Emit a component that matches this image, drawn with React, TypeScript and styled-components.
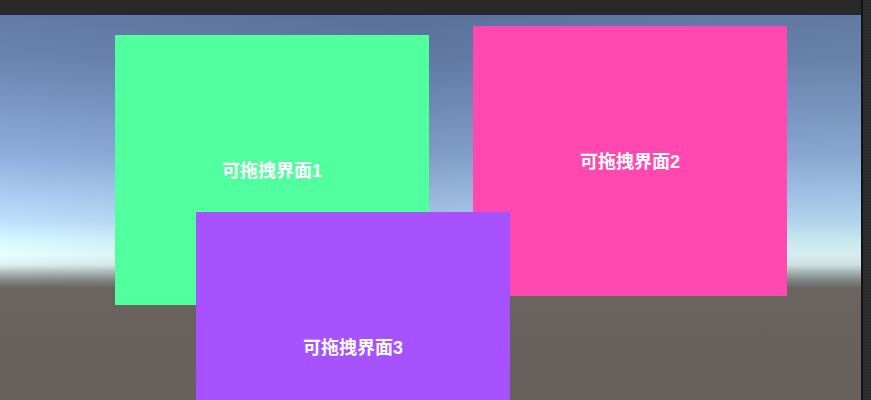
import React, { useRef, useState } from 'react';
import styled, { createGlobalStyle } from 'styled-components';

const GlobalStyle = createGlobalStyle`
  * { box-sizing: border-box; }
  body {
    margin: 0;
    background: #282828;
    font-family: "Liberation Sans", "Noto Sans CJK SC", sans-serif;
  }
`;

const Editor = styled.div`
  display: flex;
  height: 100vh;
  overflow: hidden;
`;

const GameView = styled.main`
  flex: 1;
  display: flex;
  flex-direction: column;
  min-width: 0;
`;

const TopBar = styled.header`
  height: 15px;
  background: #292929;
  border-bottom: 1px solid #242a35;
`;

const SideBar = styled.aside`
  width: 10px;
  border-left: 2px solid #121316;
  background: repeating-linear-gradient(#292929 0 1px, #2e2e2e 1px 3px);
`;

const Scene = styled.section`
  position: relative;
  flex: 1;
  overflow: hidden;
  background:
    linear-gradient(
      90deg,
      transparent,
      rgba(50, 65, 95, 0.18) 45%,
      rgba(55, 75, 110, 0.1) 75%,
      rgba(90, 120, 125, 0.13)
    ) top / 100% 270px no-repeat,
    linear-gradient(
      #637ba7 0,
      #6b84b1 45px,
      #7b97c6 90px,
      #8faedc 140px,
      #a8c9f0 175px,
      #bddffc 205px,
      #d6f8ff 225px,
      #e9ffff 240px,
      #deefee 250px,
      #b1bebb 257px,
      #858b88 265px,
      #6b6562 273px,
      #69635f 300px,
      #67605b 100%
    );
`;

const Panel = styled.article<{ $color: string }>`
  position: absolute;
  display: grid;
  place-items: center;
  width: 314px;
  height: 270px;
  padding-top: 2px;
  background: ${({ $color }) => $color};
  cursor: move;
  touch-action: none;
  user-select: none;
`;

const PanelTitle = styled.h2`
  margin: 0;
  color: #fff;
  font-size: 18px;
  line-height: 24px;
  font-weight: 700;
`;

type PanelData = { title: string; color: string; x: number; y: number };

const panels: PanelData[] = [
  { title: '可拖拽界面1', color: '#51ff9f', x: 115, y: 20 },
  { title: '可拖拽界面2', color: '#ff49b0', x: 473, y: 11 },
  { title: '可拖拽界面3', color: '#a851ff', x: 196, y: 197 },
];

function DraggablePanel({ title, color, x, y }: PanelData) {
  const [place, setPlace] = useState({ x, y });
  const grip = useRef<{ x: number; y: number } | null>(null);

  const start = (event: React.PointerEvent<HTMLElement>) => {
    event.currentTarget.setPointerCapture(event.pointerId);
    grip.current = { x: event.clientX - place.x, y: event.clientY - place.y };
  };
  const move = (event: React.PointerEvent<HTMLElement>) => {
    if (grip.current) {
      setPlace({ x: event.clientX - grip.current.x, y: event.clientY - grip.current.y });
    }
  };
  const stop = () => {
    grip.current = null;
  };

  return (
    <Panel
      $color={color}
      style={{ left: place.x, top: place.y }}
      onPointerDown={start}
      onPointerMove={move}
      onPointerUp={stop}
      onPointerCancel={stop}
    >
      <PanelTitle>{title}</PanelTitle>
    </Panel>
  );
}

export default function App() {
  return (
    <>
      <GlobalStyle />
      <Editor>
        <GameView>
          <TopBar />
          <Scene>
            {panels.map((panel) => (
              <DraggablePanel key={panel.title} {...panel} />
            ))}
          </Scene>
        </GameView>
        <SideBar />
      </Editor>
    </>
  );
}
